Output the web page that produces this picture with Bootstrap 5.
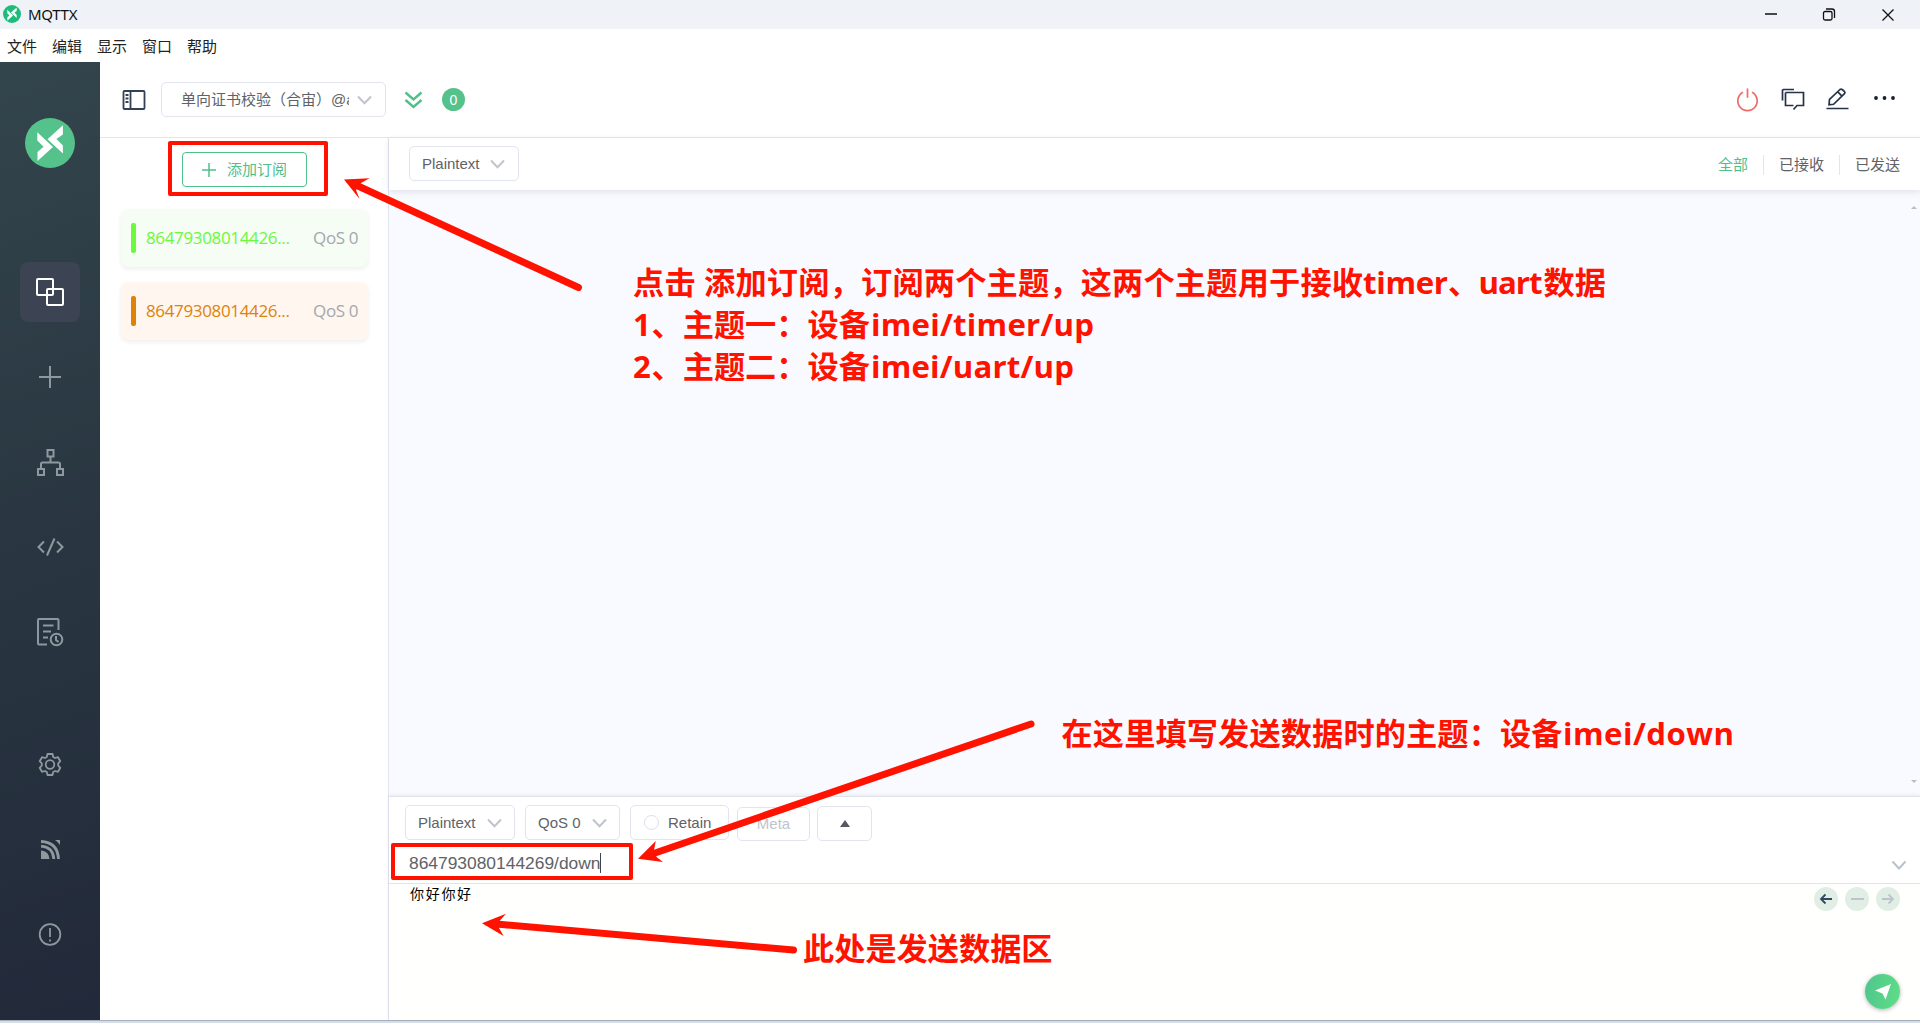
<!DOCTYPE html>
<html lang="zh-CN">
<head>
<meta charset="utf-8">
<title>MQTTX</title>
<link rel="stylesheet" href="https://cdn.jsdelivr.net/npm/bootstrap@5.3.0/dist/css/bootstrap.min.css">
<script src="https://cdn.jsdelivr.net/npm/bootstrap@5.3.0/dist/js/bootstrap.bundle.min.js"></script>
<style>
body{width:1920px;height:1023px;overflow:hidden;font:15px/20px "Liberation Sans","Noto Sans CJK SC",sans-serif;color:#606266;background:#fff}
svg{display:block;flex:none;overflow:visible}
.titlebar{height:29px;background:#eff3f8;color:#111;padding-left:3px;padding-right:24px;padding-bottom:2px;font-family:"Noto Sans","Noto Sans CJK SC",sans-serif}
.app-name{letter-spacing:-.3px;margin-left:7px}
.menubar{height:33px;padding-left:7px;gap:15px;color:#222;font-family:"Noto Sans CJK SC",sans-serif}
.workspace{height:958px}
.rail{width:100px;background:linear-gradient(160deg,#33454c 0%,#293641 50%,#22293a 100%);color:#8d999f;padding-top:56px}
.rail-item{width:60px;height:60px;border-radius:8px;margin-bottom:25px}
.rail-item.current{background:#3c4353;color:#fff;margin-top:94px}
.rail-item.gap-above{margin-top:47px}
.topbar{height:76px;border-bottom:1px solid #e4e6f1;padding-left:22px;padding-right:27px}
.pick{border:1px solid #e2e4f0;border-radius:5px;height:35px;background:#fff;flex:none;color:#606266}
.conn-pick{width:225px;padding:0 14px 0 19px}
.conn-name{width:168px;overflow:hidden;white-space:nowrap}
.count{width:23px;height:23px;border-radius:50%;background:#54c28a;color:#fff;font-size:14px}
.subs{width:289px;border-right:1px solid #e2e4f0;padding:14px 20px 0 21px}
.btn-sub{width:125px;height:35px;border:1px solid #4fc08a;border-radius:4px;color:#4fc08a;padding:0;font-size:15px;line-height:20px}
.topic-card{width:247px;height:58px;border-radius:8px;box-shadow:0 2px 5px rgba(0,0,0,.07);padding:0 10px 0 10px;font:400 17px/24px "Open Sans","Noto Sans",sans-serif}
.topic-card + .topic-card{margin-top:15px}
.swatch{width:5px;height:30px;border-radius:2px;margin-right:10px;background:currentColor}
.topic-id{letter-spacing:-.35px;white-space:nowrap}
.qos{color:#a4a8ae;letter-spacing:-.4px}
.green{background:#f6fdf4;color:#6cf83c}.orange{background:#fff6ef;color:#df8208}
.filterbar{height:52px;padding:0 20px;box-shadow:0 2px 6px rgba(40,50,80,.12);z-index:1}
.filterbar .pick{margin-bottom:1px}
.filters{padding-top:2px}
.filters span+span{border-left:1px solid #e2e4f0;margin-left:15px;padding-left:15px}
.filters .on{color:#4fc08a}
.feed{background:#f9faff;padding:15px 2px 12px 0}
.publish{height:224px;border-top:1px solid #dfe2ea;box-shadow:0 -1px 4px rgba(40,50,80,.08);z-index:1;background:#fff}
.pub-tools{padding:8px 0 0 16px;height:43px}
.topic-row{height:44px;padding:2px 14px 0 20px;font-size:17.4px;border-bottom:1px solid #e2e4ea}
.caret{width:1px;height:20px;background:#444}
.editor{background:#fffffd;color:#000;padding:3px 20px 11px 21px;font:14px/16px "Noto Sans CJK SC",sans-serif}
.editor .payload{letter-spacing:1.7px;line-height:12px}
.rounds{gap:7px}
.round{width:24px;height:24px;border-radius:50%;background:#e1eee5;color:#bcc3cf}
.send{width:35px;height:35px;border-radius:50%;background:linear-gradient(100deg,#4fc68d,#5fdd87);box-shadow:0 1px 4px rgba(0,0,0,.3)}
.bottom-edge{height:3px;border-top:1px solid #a8b0bd;background:#d6dde7}
.notes{position:absolute;left:0;top:0;z-index:5;pointer-events:none}
.notes text{font:700 31.2px "Open Sans","Noto Sans CJK SC",sans-serif;fill:#ff1200}
</style>
</head>
<body class="d-flex flex-column position-relative">
<header class="titlebar d-flex align-items-center">
  <svg width="18" height="18" viewBox="25 118 50 50"><circle cx="50" cy="143" r="25" fill="#1fbb7a"/><path fill="#fff" d="M37 131L53 147 37 162V152L43 147 37 141ZM63 125V135L57 139 63 146V154L47 139Z"/></svg>
  <span class="app-name">MQTTX</span>
  <svg class="ms-auto" width="131" height="16" fill="none" stroke="#111" stroke-width="1.3"><path d="M0 8H12M117.500 3.500L128.500 14.500M128.500 3.500L117.500 14.500"/><rect x="58.500" y="5.500" width="8.500" height="8.500" rx="1.500"/><path d="M61 3H67Q69.500 3 69.500 5.500V12"/></svg>
</header>
<nav class="menubar d-flex align-items-center"><span>文件</span><span>编辑</span><span>显示</span><span>窗口</span><span>帮助</span></nav>

<div class="workspace d-flex">
  <aside class="rail d-flex flex-column align-items-center flex-shrink-0">
    <svg width="50" height="50" viewBox="25 118 50 50"><circle cx="50" cy="143" r="25" fill="#54c28a"/><path fill="#fff" d="M37.300 132.300L53 147 37.500 161V152L43.600 146.700 37.300 140.500ZM62.900 125.300V134.500L56.400 139 62.900 145.500V153.500L47.500 139.300Z"/></svg>
    <div class="rail-item current d-flex align-items-center justify-content-center"><svg width="28" height="28" fill="none" stroke="currentColor" stroke-width="2"><rect x="1" y="1" width="16" height="16" rx="1"/><rect x="11" y="11" width="16" height="16" rx="1"/></svg></div>
    <div class="rail-item d-flex align-items-center justify-content-center"><svg width="22" height="22" stroke="currentColor" stroke-width="2"><path d="M11 0V22M0 11H22"/></svg></div>
    <div class="rail-item d-flex align-items-center justify-content-center"><svg width="27" height="27" fill="none" stroke="currentColor" stroke-width="2"><path d="M10.500 1H16.500V7.500H10.500ZM1 20H7V26H1ZM20 20H26V26H20ZM13.500 7.500V13.500M4 20V15Q4 13.500 5.500 13.500H21.500Q23 13.500 23 15V20"/></svg></div>
    <div class="rail-item d-flex align-items-center justify-content-center"><svg width="27" height="18" fill="none" stroke="currentColor" stroke-width="2"><path d="M7 3.500L1.500 9 7 14.500M20 3.500L25.500 9 20 14.500M17.500 .5L10 17.500"/></svg></div>
    <div class="rail-item d-flex align-items-center justify-content-center"><svg width="26" height="28" fill="none" stroke="currentColor" stroke-width="2"><path d="M10 26.500H2Q1 26.500 1 25.500V2Q1 1 2 1H20.500Q21.500 1 21.500 2V12M6 7.500H16.500M6 13.500H14M6 19.500H11"/><circle cx="19.500" cy="21.500" r="5.800"/><path d="M19 18V22L21.500 24"/></svg></div>
    <div class="rail-item gap-above d-flex align-items-center justify-content-center"><svg width="22" height="23" viewBox="0 0 22 23" fill="none" stroke="currentColor" stroke-width="1.800" stroke-linejoin="round"><path d="M8.500 1H13.500L14.200 4 16 5 19 4.200 21.300 8.200 19.200 10.400V12.600L21.300 14.800 19 18.800 16 18 14.200 19 13.500 22H8.500L7.800 19 6 18 3 18.800 .7 14.800 2.800 12.600V10.400L.7 8.200 3 4.200 6 5 7.800 4Z"/><circle cx="11" cy="11.500" r="4.300"/></svg></div>
    <div class="rail-item d-flex align-items-center justify-content-center"><svg width="19" height="19" fill="currentColor"><path d="M0 10.500Q8 11 8.500 19H0Z"/><path fill="none" stroke="currentColor" stroke-width="2.800" d="M0 6.200Q12 7 12.800 19M0 1.500Q16.500 2 17.500 19"/><path d="M14 0H19V5Q17 2 14 0Z"/></svg></div>
    <div class="rail-item d-flex align-items-center justify-content-center"><svg width="22" height="22" fill="none" stroke="currentColor" stroke-width="1.800"><circle cx="11" cy="11.500" r="10.300"/><path d="M11 5V14M11 16.500V18.500"/></svg></div>
  </aside>

  <div class="d-flex flex-column flex-grow-1">
    <div class="topbar d-flex align-items-center flex-shrink-0">
      <svg width="23" height="20" fill="none" stroke="#344054" stroke-width="1.800"><rect x="1.500" y="1" width="21" height="18" rx="1"/><path d="M8.500 1V19M3.500 5H6.500M3.500 8.500H6.500M3.500 12H6.500"/></svg>
      <div class="pick conn-pick d-flex align-items-center ms-3"><span class="conn-name">单向证书校验（合宙）@a</span><svg class="ms-auto" width="13" height="8" fill="none" stroke="#c0c4cc" stroke-width="2"><path d="M0 .5L6.500 7.200 13 .5"/></svg></div>
      <svg width="17" height="17" style="margin-left:19px" fill="none" stroke="#4fc08a" stroke-width="2.400"><path d="M.5 1.500L8.500 8.500 16.500 1.500M.5 9L8.500 16 16.500 9"/></svg>
      <span class="count d-flex align-items-center justify-content-center" style="margin-left:20px">0</span>
      <svg class="ms-auto" width="158" height="24" fill="none" stroke="#263248" stroke-width="1.700">
        <path stroke="#ee6a66" d="M17 4.300A9.700 9.700 0 1 1 8 4.300M12.500 .5V9.700"/>
        <path d="M47.500 12.500V2.500Q47.500 1.500 48.500 1.500H59M50.500 4.500H68.500V17.500H62L58.500 21.500M58.500 17.500H50.500V4.500"/>
        <path d="M91.500 20.500H113.500M94 16.800L94.500 11.500 105 1.500Q106 .6 107.200 1.500L109.600 3.700Q110.500 4.700 109.500 5.700L98.600 16.300ZM102.500 3.700L107 8.200"/>
        <g fill="#17202f" stroke="none"><circle cx="141" cy="10" r="1.900"/><circle cx="149.500" cy="10" r="1.900"/><circle cx="158" cy="10" r="1.900"/></g>
      </svg>
    </div>
    <div class="d-flex flex-grow-1">
      <section class="subs flex-shrink-0">
        <div class="d-flex justify-content-center mb-4"><button class="btn btn-sub d-flex align-items-center justify-content-center"><svg width="14" height="14" stroke="currentColor" stroke-width="1.500" style="margin-right:11px"><path d="M7 0V14M0 7H14"/></svg>添加订阅</button></div>
        <div class="topic-card green d-flex align-items-center" style="margin-top:-2px"><span class="swatch"></span><span class="topic-id">86479308014426...</span><span class="qos ms-auto">QoS 0</span></div>
        <div class="topic-card orange d-flex align-items-center"><span class="swatch"></span><span class="topic-id">86479308014426...</span><span class="qos ms-auto">QoS 0</span></div>
      </section>
      <main class="d-flex flex-column flex-grow-1">
        <div class="filterbar d-flex align-items-center justify-content-between bg-white position-relative">
          <div class="pick d-flex align-items-center justify-content-between" style="width:110px;padding:0 14px 0 12px">Plaintext<svg width="13" height="8" fill="none" stroke="#c0c4cc" stroke-width="2"><path d="M0 .5L6.500 7.200 13 .5"/></svg></div>
          <div class="filters d-flex"><span class="on">全部</span><span>已接收</span><span>已发送</span></div>
        </div>
        <div class="feed flex-grow-1 d-flex flex-column align-items-end justify-content-between"><svg width="8" height="4" fill="#bcbcc4"><path d="M1 4L4 1 7 4Z"/></svg><svg width="8" height="4" fill="#bcbcc4"><path d="M1 0L4 3 7 0Z"/></svg></div>
        <section class="publish d-flex flex-column position-relative">
          <div class="pub-tools d-flex align-items-start">
            <div class="pick d-flex align-items-center justify-content-between" style="width:110px;padding:0 13px 0 12px">Plaintext<svg width="13" height="8" fill="none" stroke="#c0c4cc" stroke-width="2"><path d="M0 .5L6.500 7.200 13 .5"/></svg></div>
            <div class="pick d-flex align-items-center justify-content-between" style="width:95px;margin-left:10px;padding:0 13px 0 12px">QoS 0<svg width="13" height="8" fill="none" stroke="#c0c4cc" stroke-width="2"><path d="M0 .5L6.500 7.200 13 .5"/></svg></div>
            <div class="pick d-flex align-items-center" style="width:99px;margin-left:10px;padding-left:13px"><svg width="15" height="15" style="margin-right:9px" fill="none" stroke="#dcdfe6"><circle cx="7.500" cy="7.500" r="7"/></svg>Retain</div>
            <div class="pick d-flex align-items-center justify-content-center" style="width:73px;height:34px;margin:2px 0 0 8px;color:#c0c4cc">Meta</div>
            <div class="pick d-flex align-items-center justify-content-center" style="width:55px;margin:1px 0 0 7px"><svg width="10" height="7" fill="#55585e"><path d="M0 7L5 0 10 7Z"/></svg></div>
          </div>
          <div class="topic-row d-flex align-items-center"><span>864793080144269/down</span><span class="caret"></span><svg class="ms-auto mt-1" width="14" height="8" fill="none" stroke="#b9c0ce" stroke-width="1.900"><path d="M.5 .5L7 7.500 13.500 .5"/></svg></div>
          <div class="editor flex-grow-1 d-flex justify-content-between">
            <span class="payload">你好你好</span>
            <div class="d-flex flex-column align-items-end justify-content-between">
              <div class="rounds d-flex">
                <span class="round d-flex align-items-center justify-content-center" style="color:#2f4a63"><svg width="12" height="10" fill="none" stroke="currentColor" stroke-width="1.800"><path d="M12 5H1M5.500 .5L1 5 5.500 9.500"/></svg></span>
                <span class="round d-flex align-items-center justify-content-center"><svg width="13" height="2" stroke="currentColor" stroke-width="2"><path d="M0 1H13"/></svg></span>
                <span class="round d-flex align-items-center justify-content-center"><svg width="12" height="10" fill="none" stroke="currentColor" stroke-width="1.800"><path d="M0 5H11M6.500 .5L11 5 6.500 9.500"/></svg></span>
              </div>
              <span class="send d-flex align-items-center justify-content-center"><svg width="16" height="16" fill="#fff"><path d="M16 0L10.500 15.500 7.500 9.500 0 6.500Z"/></svg></span>
            </div>
          </div>
        </section>
      </main>
    </div>
  </div>
</div>
<div class="bottom-edge flex-shrink-0"></div>

<!-- tutorial annotations over the window -->
<svg class="notes" width="1920" height="1023" viewBox="0 0 1920 1023">
  <g fill="none" stroke="#ff1200" stroke-width="4" stroke-linejoin="round"><rect x="170" y="143" width="156" height="51"/><rect x="393" y="845" width="238" height="33"/></g>
  <g stroke="#ff1200" stroke-width="7" stroke-linecap="round"><path d="M358 186L578.500 287.500M655 853L1031 724M499 924.300L793.500 950"/></g>
  <g fill="#ff1200"><path d="M344 179.500L369.500 178.300 361 183 356 190 359.600 199Z"/><path d="M638 858.700L655.800 841 654 850 656.500 857 663 862Z"/><path d="M482 923.300L506 913.700 499.500 921 499 928 503.600 936Z"/></g>
  <text y="294"><tspan x="633" textLength="730">点击 添加订阅，订阅两个主题，这两个主题用于接收</tspan><tspan x="1363" textLength="85">timer</tspan><tspan x="1448">、</tspan><tspan x="1478.500" textLength="64">uart</tspan><tspan x="1543.500">数据</tspan></text>
  <text y="336"><tspan x="633">1</tspan><tspan x="651.500">、主题一：设备</tspan><tspan x="871" textLength="223">imei/timer/up</tspan></text>
  <text y="378"><tspan x="633">2</tspan><tspan x="651.500">、主题二：设备</tspan><tspan x="871" textLength="203">imei/uart/up</tspan></text>
  <text y="744.500"><tspan x="1061.500" textLength="501">在这里填写发送数据时的主题：设备</tspan><tspan x="1563" textLength="171">imei/down</tspan></text>
  <text x="803" y="959.500">此处是发送数据区</text>
</svg>
</body>
</html>
